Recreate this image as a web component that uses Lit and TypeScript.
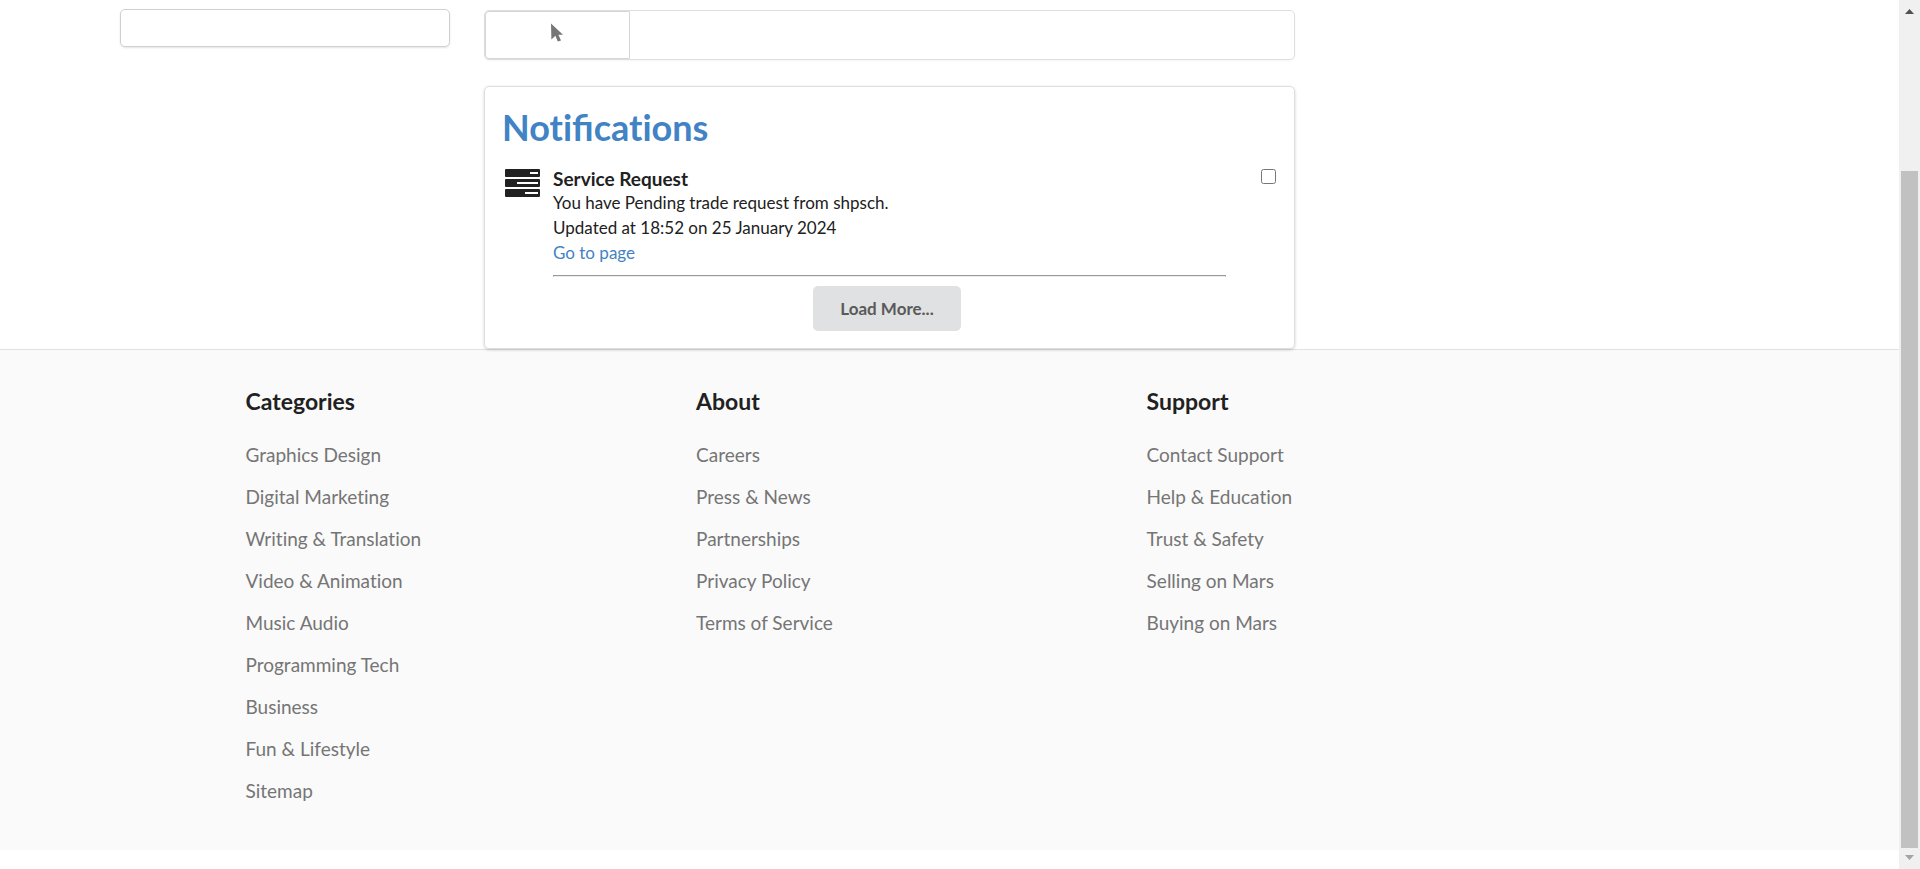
import { LitElement, html, css } from "lit";
import { customElement, property } from "lit/decorators.js";

interface LinkGroup {
  title: string;
  links: string[];
}

const GROUPS: LinkGroup[] = [
  {
    title: "Categories",
    links: [
      "Graphics Design",
      "Digital Marketing",
      "Writing & Translation",
      "Video & Animation",
      "Music Audio",
      "Programming Tech",
      "Business",
      "Fun & Lifestyle",
      "Sitemap",
    ],
  },
  {
    title: "About",
    links: ["Careers", "Press & News", "Partnerships", "Privacy Policy", "Terms of Service"],
  },
  {
    title: "Support",
    links: ["Contact Support", "Help & Education", "Trust & Safety", "Selling on Mars", "Buying on Mars"],
  },
];

@customElement("notification-item")
class NotificationItem extends LitElement {
  @property() heading = "";
  @property() message = "";
  @property() time = "";

  static styles = css`
    :host {
      display: flex;
      font-size: 17px;
      line-height: 25px;
      color: #212121;
    }
    .icon {
      flex: none;
      width: 35px;
      height: 28px;
      margin: 1px 13px 0 3px;
    }
    .body {
      flex: 1;
      min-width: 0;
    }
    .title {
      font-size: 19px;
      line-height: 22px;
      font-weight: 700;
      margin: 0;
    }
    .line {
      margin: 0;
    }
    .link {
      color: #4183c4;
      text-decoration: none;
    }
    .rule {
      margin: 10px 0 0;
      border: 1px solid #999;
      border-bottom-color: #eee;
    }
    .check {
      flex: none;
      width: 15px;
      height: 15px;
      margin: 1px 1px 0 35px;
    }
  `;

  render() {
    return html`
      <svg class="icon" viewBox="0 0 35 28" fill="#212121" aria-hidden="true">
        <path
          fill-rule="evenodd"
          d="M1 0h33q1 0 1 1v6q0 1-1 1H1q-1 0-1-1V1q0-1 1-1zM25 3v2h8V3z
             M1 10h33q1 0 1 1v6q0 1-1 1H1q-1 0-1-1v-6q0-1 1-1zM12 13v2h21v-2z
             M1 20h33q1 0 1 1v6q0 1-1 1H1q-1 0-1-1v-6q0-1 1-1zM20 23v2h13v-2z"
        />
      </svg>
      <div class="body">
        <h2 class="title">${this.heading}</h2>
        <p class="line">${this.message}</p>
        <p class="line">${this.time}</p>
        <a class="link" href="#">Go to page</a>
        <hr class="rule" />
      </div>
      <input class="check" type="checkbox" aria-label="Select notification" />
    `;
  }
}

@customElement("app-root")
class AppRoot extends LitElement {
  static styles = css`
    :host {
      display: flex;
      height: 100vh;
      overflow: hidden;
      background: #fff;
      font-family: Lato, "Liberation Sans", sans-serif;
      font-variant-ligatures: none;
      color: #212121;
    }
    *,
    *::before {
      box-sizing: border-box;
    }
    .page {
      flex: 1;
      min-width: 0;
    }
    .content {
      display: grid;
      grid-template-columns: 330fr 811fr 450fr;
      column-gap: 34px;
      align-items: start;
      padding: 9px 120px 0;
    }
    .side {
      height: 38px;
      border: 1px solid #d0d0d1;
      border-radius: 5px;
      box-shadow: 0 1px 2px rgba(34, 36, 38, 0.12);
    }
    .main {
      padding-top: 1px;
    }
    .menu {
      display: flex;
      height: 50px;
      border: 1px solid #dededf;
      border-radius: 5px;
      box-shadow: 0 1px 2px rgba(34, 36, 38, 0.04);
    }
    .tab {
      width: 145px;
      border: 1px solid #d6d6d7;
      border-radius: 4px 0 0 4px;
      background: #fff;
      display: flex;
      justify-content: center;
      padding: 11px 2px 0 0;
    }
    .pointer {
      width: 12px;
      height: 19px;
    }
    .segment {
      margin-top: 26px;
      padding: 17px;
      border: 1px solid #dededf;
      border-radius: 5px;
      box-shadow: 0 1px 3px rgba(34, 36, 38, 0.2);
    }
    .heading {
      margin: 0 0 18px;
      font-size: 36px;
      line-height: 46px;
      font-weight: 700;
      color: #4183c4;
    }
    .joined {
      font-variant-ligatures: common-ligatures;
    }
    .actions {
      display: flex;
      justify-content: center;
      margin-top: 9px;
      padding-right: 5px;
    }
    .more {
      height: 45px;
      padding: 0 27px;
      border: 0;
      border-radius: 5px;
      background: #e0e1e2;
      color: #5a5a5b;
      font: 700 17px/20px Lato, "Liberation Sans", sans-serif;
    }
    .footer {
      border-top: 1px solid #e2e2e3;
      background: #fafafa;
      padding: 35px 0 47px;
    }
    .groups {
      display: grid;
      grid-template-columns: repeat(3, 32%);
      max-width: 1408px;
      margin: 0 auto;
    }
    .group-title {
      margin: 0 0 26px;
      font-size: 23px;
      line-height: 32px;
      font-weight: 700;
    }
    .list {
      margin: 0;
      padding: 0;
      list-style: none;
      display: grid;
      gap: 18px;
    }
    .item {
      font-size: 19px;
      line-height: 24px;
    }
    .item a {
      color: #757575;
      text-decoration: none;
    }
    .scroll {
      flex: none;
      width: 21px;
      background: #f0f0f0;
      display: flex;
      flex-direction: column;
      align-items: center;
      padding: 9px 0;
    }
    .arrow {
      width: 9px;
      height: 5px;
      flex: none;
    }
    .track {
      flex: 1;
      width: 17px;
      padding: 157px 0 7px;
      display: flex;
    }
    .thumb {
      flex: 1;
      background: #c1c1c1;
    }
  `;

  render() {
    return html`
      <div class="page">
        <div class="content">
          <aside class="side"></aside>
          <main class="main">
            <nav class="menu">
              <button class="tab" type="button" aria-label="Pointer">
                <svg class="pointer" viewBox="0 0 12 19" fill="#767676" aria-hidden="true">
                  <path d="M0 0.4 12 11.8H7.4L10 17.4 6.8 18.6 4.4 12.8 0.4 16.6z" />
                </svg>
              </button>
            </nav>
            <section class="segment">
              <h1 class="heading">Noti<span class="joined">fi</span>cations</h1>
              <notification-item
                heading="Service Request"
                message="You have Pending trade request from shpsch."
                time="Updated at 18:52 on 25 January 2024"
              ></notification-item>
              <div class="actions">
                <button class="more" type="button">Load More...</button>
              </div>
            </section>
          </main>
        </div>
        <footer class="footer">
          <div class="groups">
            ${GROUPS.map(
              (group) => html`
                <section>
                  <h2 class="group-title">${group.title}</h2>
                  <ul class="list">
                    ${group.links.map((link) => html`<li class="item"><a href="#">${link}</a></li>`)}
                  </ul>
                </section>
              `
            )}
          </div>
        </footer>
      </div>
      <div class="scroll" aria-hidden="true">
        <svg class="arrow" viewBox="0 0 9 5" fill="#505050"><path d="M0 5 4.5 0 9 5z" /></svg>
        <div class="track"><div class="thumb"></div></div>
        <svg class="arrow" viewBox="0 0 9 5" fill="#a3a3a3"><path d="M0 0h9L4.5 5z" /></svg>
      </div>
    `;
  }
}
